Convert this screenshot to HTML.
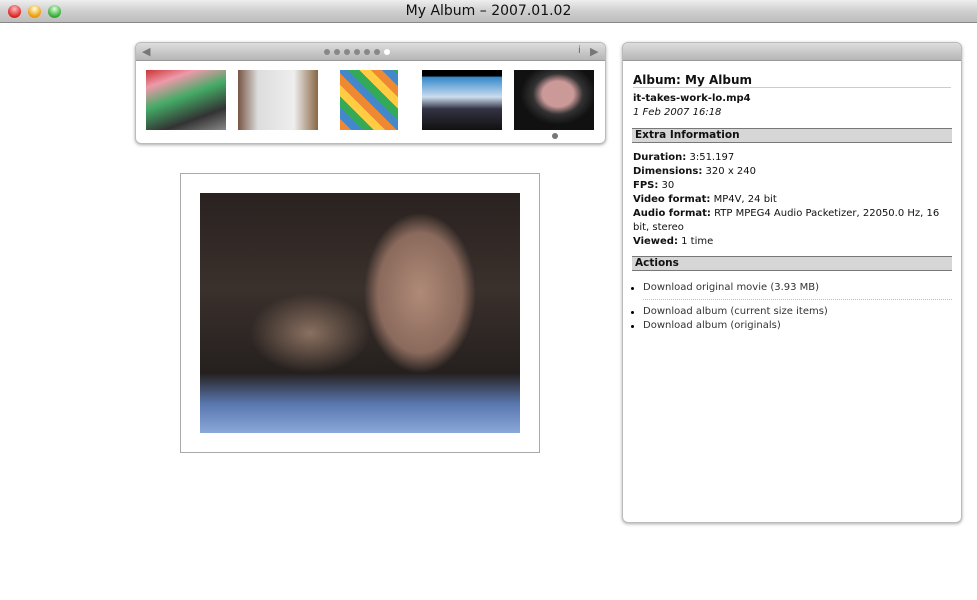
<!DOCTYPE html>
<html><head><style>
body{margin:0;width:977px;height:600px;background:#fff;position:relative;overflow:hidden;font-family:"DejaVu Sans",Verdana,sans-serif;font-size:10px;color:#111}
.tb{position:absolute;left:0;top:0;width:977px;height:22px;background:linear-gradient(#eee,#cfcfcf 50%,#bdbdbd);border-bottom:1px solid #888;text-align:center;font:14px/22px "DejaVu Sans",sans-serif;color:#111}
.b{position:absolute;top:5px;width:13px;height:13px;border-radius:50%}
.strip{position:absolute;left:135px;top:42px;width:469px;height:100px;border:1px solid #bbb;border-radius:6px;box-shadow:0 1px 3px #aaa;overflow:hidden;background:#fff}
.hd{height:17px;background:linear-gradient(#ddd,#b6b6b6);border-bottom:1px solid #999;position:relative}
.th{position:absolute;top:27px;width:80px;height:60px}
.side{position:absolute;left:622px;top:42px;width:338px;height:479px;border:1px solid #bbb;border-radius:6px;box-shadow:0 1px 3px #aaa;overflow:hidden;background:#fff}
.sec{margin:0 9px;background:#d6d6d6;border-top:1px solid #777;border-bottom:1px solid #777;font-weight:bold;padding:0 3px;height:13px;line-height:13px;font-size:10.5px}
.c{margin:0 10px;line-height:14px}
.d{position:absolute;top:6px;width:6px;height:6px;border-radius:50%;background:#888}
ul{margin:0;padding:0 0 0 20px;list-style:none;position:relative}
li{position:relative}
li:before{content:"";position:absolute;left:-12px;top:6px;width:3px;height:3px;border-radius:50%;background:#000}
</style></head><body>
<div class="tb">My Album – 2007.01.02
<div class="b" style="left:8px;background:radial-gradient(circle at 50% 30%,#fbb,#d22 70%)"></div>
<div class="b" style="left:28px;background:radial-gradient(circle at 50% 30%,#ffd,#e90 70%)"></div>
<div class="b" style="left:48px;background:radial-gradient(circle at 50% 30%,#dfd,#3a3 70%)"></div>
</div>
<div class="strip"><div class="hd">
<span style="position:absolute;left:6px;top:2px;color:#777;font-size:11px">◀</span>
<div class="d" style="left:188px"></div><div class="d" style="left:198px"></div><div class="d" style="left:208px"></div><div class="d" style="left:218px"></div><div class="d" style="left:228px"></div><div class="d" style="left:238px"></div><div class="d" style="left:248px;background:#fff"></div>
<span style="position:absolute;left:442px;top:2px;color:#666">i</span>
<span style="position:absolute;left:454px;top:2px;color:#777;font-size:11px">▶</span>
</div>
<div class="th" style="left:10px;background:linear-gradient(160deg,#c33,#e9a 20%,#4a6 45%,#333 75%,#888)"></div>
<div class="th" style="left:102px;background:linear-gradient(90deg,#754,#ddd 25%,#eee 70%,#864)"></div>
<div class="th" style="left:204px;width:58px;background:repeating-linear-gradient(45deg,#e83 0 8px,#48c 8px 16px,#3a5 16px 24px,#fc4 24px 32px)"></div>
<div class="th" style="left:286px;background:linear-gradient(#000 0 10%,#38c 12%,#cde 45%,#334 65%,#111)"></div>
<div class="th" style="left:378px;background:radial-gradient(ellipse at 55% 40%,#c99 0 25%,#333 40%,#111 60%),#124"></div>
<div style="position:absolute;left:416px;top:90px;width:6px;height:6px;border-radius:50%;background:#777"></div>
</div>
<div style="position:absolute;left:180px;top:173px;width:358px;height:278px;border:1px solid #aaa"></div>
<div style="position:absolute;left:200px;top:193px;width:320px;height:240px;background:radial-gradient(ellipse 70px 100px at 220px 100px,#b08a78 0,#8a6a5c 60%,transparent 80%),radial-gradient(ellipse 60px 40px at 110px 140px,#8a7060,transparent),linear-gradient(#2a2220,#3a302c 40%,#25201e 75%,#5a78b0 88%,#8aa8d8)"></div>
<div class="side"><div class="hd"></div>
<div class="c" style="margin-top:12px;font-size:12px;font-weight:bold;border-bottom:1px solid #ccc;padding-bottom:0">Album: My Album</div>
<div class="c" style="margin-top:4px"><b>it-takes-work-lo.mp4</b><br><i>1 Feb 2007 16:18</i></div>
<div class="sec" style="margin-top:8px">Extra Information</div>
<div class="c" style="margin-top:8px"><b>Duration:</b> 3:51.197<br><b>Dimensions:</b> 320 x 240<br><b>FPS:</b> 30<br><b>Video format:</b> MP4V, 24 bit<br><b>Audio format:</b> RTP MPEG4 Audio Packetizer, 22050.0 Hz, 16 bit, stereo<br><b>Viewed:</b> 1 time</div>
<div class="sec" style="margin-top:7px">Actions</div>
<ul style="margin:10px 9px 0 0;line-height:14px;color:#333">
<li style="border-bottom:1px dotted #bbb;padding-bottom:4px">Download original movie (3.93 MB)</li>
<li style="margin-top:5px">Download album (current size items)</li>
<li>Download album (originals)</li></ul>
</div>
</body></html>
